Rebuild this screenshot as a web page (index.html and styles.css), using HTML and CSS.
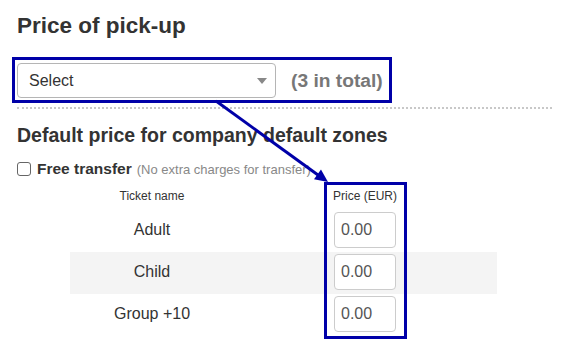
FILE: index.html
```html
<!DOCTYPE html>
<html lang="en">
<head>
    <meta charset="UTF-8">
    <meta name="viewport" content="width=device-width, initial-scale=1.0">
    <title>Price of pick-up</title>
    <link rel="stylesheet" href="styles.css">
</head>
<body>
    <div class="page">
        <h1 class="title">Price of pick-up</h1>

        <div class="zone-picker">
            <div class="select-box">
                <span>Select</span>
                <svg class="caret" width="10" height="6" viewBox="0 0 10 6"><path d="M0 0h10L5 6z" fill="#888"/></svg>
            </div>
            <span class="total">(3 in total)</span>
        </div>

        <div class="divider"></div>

        <h2 class="subtitle">Default price for company default zones</h2>

        <label class="free-row">
            <input type="checkbox" class="check">
            <strong>Free transfer</strong>
            <span class="hint">(No extra charges for transfer)</span>
        </label>

        <div class="prices">
            <div class="row head">
                <span class="name">Ticket name</span>
                <span></span>
                <span class="price">Price (EUR)</span>
                <span></span>
            </div>
            <div class="row">
                <span class="name">Adult</span>
                <span></span>
                <span class="price"><input class="amount" value="0.00"></span>
                <span></span>
            </div>
            <div class="row striped">
                <span class="name">Child</span>
                <span></span>
                <span class="price"><input class="amount" value="0.00"></span>
                <span></span>
            </div>
            <div class="row">
                <span class="name">Group +10</span>
                <span></span>
                <span class="price"><input class="amount" value="0.00"></span>
                <span></span>
            </div>
            <!-- annotation frame around the price column -->
            <div class="price-frame"></div>
        </div>

        <!-- annotation arrow -->
        <svg class="arrow" width="561" height="349" viewBox="0 0 561 349">
            <line x1="216" y1="101" x2="318" y2="175" stroke="#0000a8" stroke-width="3"/>
            <polygon points="328,182 314,179.3 321,169.5" fill="#0000a8"/>
        </svg>
    </div>
</body>
</html>
```

FILE: styles.css
```css
body {
    margin: 0;
    font-family: "Liberation Sans", Arial, sans-serif;
    color: #333;
    background-color: #fff;
}
.page {
    position: relative;
    padding: 14px 9px 0 17px;
    height: 335px;
}
.title {
    margin: 0;
    font-size: 22.5px;
    line-height: 24px;
    font-weight: bold;
}
.zone-picker {
    display: inline-flex;
    align-items: center;
    margin: 19px 0 0 -5px;
    padding: 3px 6px 2px 2px;
    border: 3px solid #0000a8;
}
.select-box {
    box-sizing: border-box;
    width: 259px;
    height: 35px;
    display: flex;
    align-items: center;
    justify-content: space-between;
    padding: 0 8px 0 11px;
    border: 1px solid #b5b5b5;
    border-radius: 4px;
    font-size: 16px;
    color: #333;
}
.caret {
    display: block;
}
.total {
    margin-left: 15px;
    font-size: 19.2px;
    font-weight: bold;
    color: #777;
}
.divider {
    margin-top: 4px;
    border-top: 2px dotted #c8c8c8;
}
.subtitle {
    margin: 15px 0 0;
    font-size: 19.5px;
    line-height: 22px;
    font-weight: bold;
}
.free-row {
    display: flex;
    align-items: center;
    margin-top: 13px;
    height: 20px;
    font-size: 15.5px;
}
.check {
    appearance: none;
    box-sizing: border-box;
    width: 14px;
    height: 14px;
    margin: 0 6px 0 0;
    border: 1px solid #666;
    border-radius: 3px;
    background: #fff;
}
.hint {
    margin-left: 5px;
    font-size: 13px;
    color: #888;
}
.prices {
    position: relative;
    width: 427px;
    margin-left: 53px;
}
.row {
    display: grid;
    grid-template-columns: 164px 92px 78px 93px;
    align-items: center;
    height: 42px;
    padding: 2px 0 4px;
    box-sizing: border-box;
    font-size: 16px;
}
.row.head {
    height: 31px;
    padding: 10px 0 7px;
    align-items: start;
    font-size: 12px;
    line-height: 14px;
}
.row.striped {
    background-color: #f4f4f4;
}
.name, .price {
    display: flex;
    justify-content: center;
}
.amount {
    box-sizing: border-box;
    width: 62px;
    height: 36px;
    padding: 0 6px;
    border: 1px solid #ccc;
    border-radius: 4px;
    font-family: inherit;
    font-size: 16px;
    color: #555;
    background: #fff;
}
.price-frame {
    position: absolute;
    left: 254px;
    top: 3px;
    width: 83px;
    height: 157px;
    box-sizing: border-box;
    border: 3px solid #0000a8;
}
.arrow {
    position: absolute;
    left: 0;
    top: 0;
    pointer-events: none;
}
```
